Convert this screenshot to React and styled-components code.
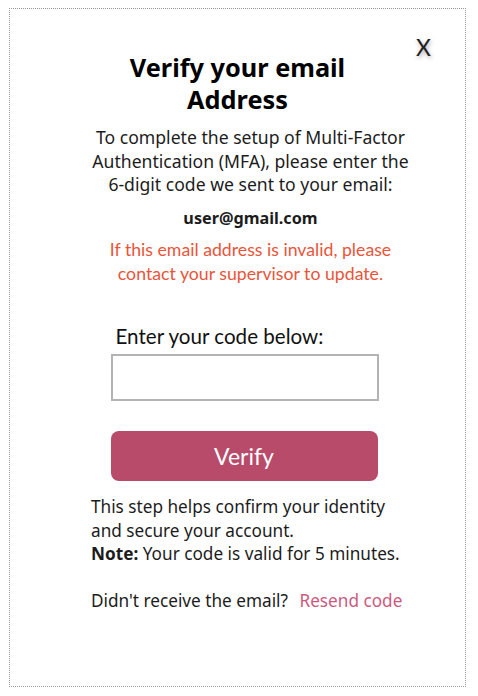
import React from "react";
import styled, { createGlobalStyle } from "styled-components";

const Global = createGlobalStyle`
  html, body { margin: 0; padding: 0; background: #ffffff; }
  body { font-family: "Noto Sans", "Open Sans", sans-serif; color: #1f1f1f; }
`;

const Card = styled.div`
  position: relative;
  box-sizing: border-box;
  margin: 8px 0 0 9px;
  width: 457px;
  height: 679px;
  border: 1px dotted #9a9a9a;
  display: flex;
  flex-direction: column;
  align-items: center;
  padding: 42px 0 0 26px;
`;

const Close = styled.button`
  position: absolute;
  top: 24px;
  right: 34px;
  border: none;
  background: none;
  padding: 0;
  font-family: Lato, "Liberation Sans", sans-serif;
  font-size: 23px;
  color: #222;
  text-shadow: 1px 2px 4px rgba(0, 0, 0, 0.35);
  cursor: pointer;
`;

const Title = styled.h1`
  margin: 0 26px 11px 0;
  font-family: "Noto Sans", sans-serif;
  font-weight: 700;
  font-size: 25.3px;
  line-height: 32px;
  text-align: center;
  color: #000;
  width: 260px;
`;

const Text = styled.p`
  margin: 0 0 ${(p) => p.$mb || 0}px;
  font-size: ${(p) => (p.$bold ? 16.2 : 17.6)}px;
  line-height: 23.5px;
  text-align: center;
  color: #1c1c1c;
  white-space: nowrap;
  font-weight: ${(p) => (p.$bold ? 700 : 400)};
`;

const Warning = styled.p`
  margin: 0 0 39px;
  font-family: Lato, "Open Sans", sans-serif;
  font-size: 17.7px;
  line-height: 23.5px;
  text-align: center;
  white-space: nowrap;
  color: #ea543a;
`;

const Form = styled.div`
  display: flex;
  flex-direction: column;
  width: 268px;
  margin-right: 12px;
`;

const Label = styled.label`
  font-family: Lato, "Open Sans", sans-serif;
  font-size: 20.6px;
  line-height: 24px;
  color: #111;
  padding-left: 5px;
  margin-bottom: 6px;
`;

const Input = styled.input`
  box-sizing: border-box;
  width: 268px;
  height: 47px;
  border: 2px solid #b3b3b3;
  outline: none;
  margin: 0 0 30px;
`;

const Button = styled.button`
  width: 267px;
  height: 50px;
  border: none;
  border-radius: 8px;
  background: #b84a6a;
  color: #fff;
  font-family: Lato, "Open Sans", sans-serif;
  font-size: 23px;
  cursor: pointer;
`;

const Info = styled.div`
  align-self: flex-start;
  margin: 14px 0 0 55px;
  font-size: 17.2px;
  line-height: 23.5px;
  color: #1c1c1c;
  white-space: nowrap;
`;

const Line = styled.div`
  margin-bottom: ${(p) => p.$mb || 0}px;
`;

const Link = styled.a`
  color: #cd5a7e;
  text-decoration: none;
  margin-left: 7px;
  cursor: pointer;
`;

export default function App() {
  return (
    <>
      <Global />
      <Card>
        <Close aria-label="Close">X</Close>
        <Title>Verify your email Address</Title>
        <Text $mb={10}>
          To complete the setup of Multi-Factor
          <br />
          Authentication (MFA), please enter the
          <br />
          6-digit code we sent to your email:
        </Text>
        <Text $bold $mb={8}>user@gmail.com</Text>
        <Warning>
          If this email address is invalid, please
          <br />
          contact your supervisor to update.
        </Warning>
        <Form>
          <Label htmlFor="code">Enter your code below:</Label>
          <Input id="code" type="text" />
          <Button>Verify</Button>
        </Form>
        <Info>
          <Line>This step helps confirm your identity</Line>
          <Line>and secure your account.</Line>
          <Line $mb={23}>
            <b>Note:</b> Your code is valid for 5 minutes.
          </Line>
          <Line>
            Didn't receive the email? <Link>Resend code</Link>
          </Line>
        </Info>
      </Card>
    </>
  );
}
